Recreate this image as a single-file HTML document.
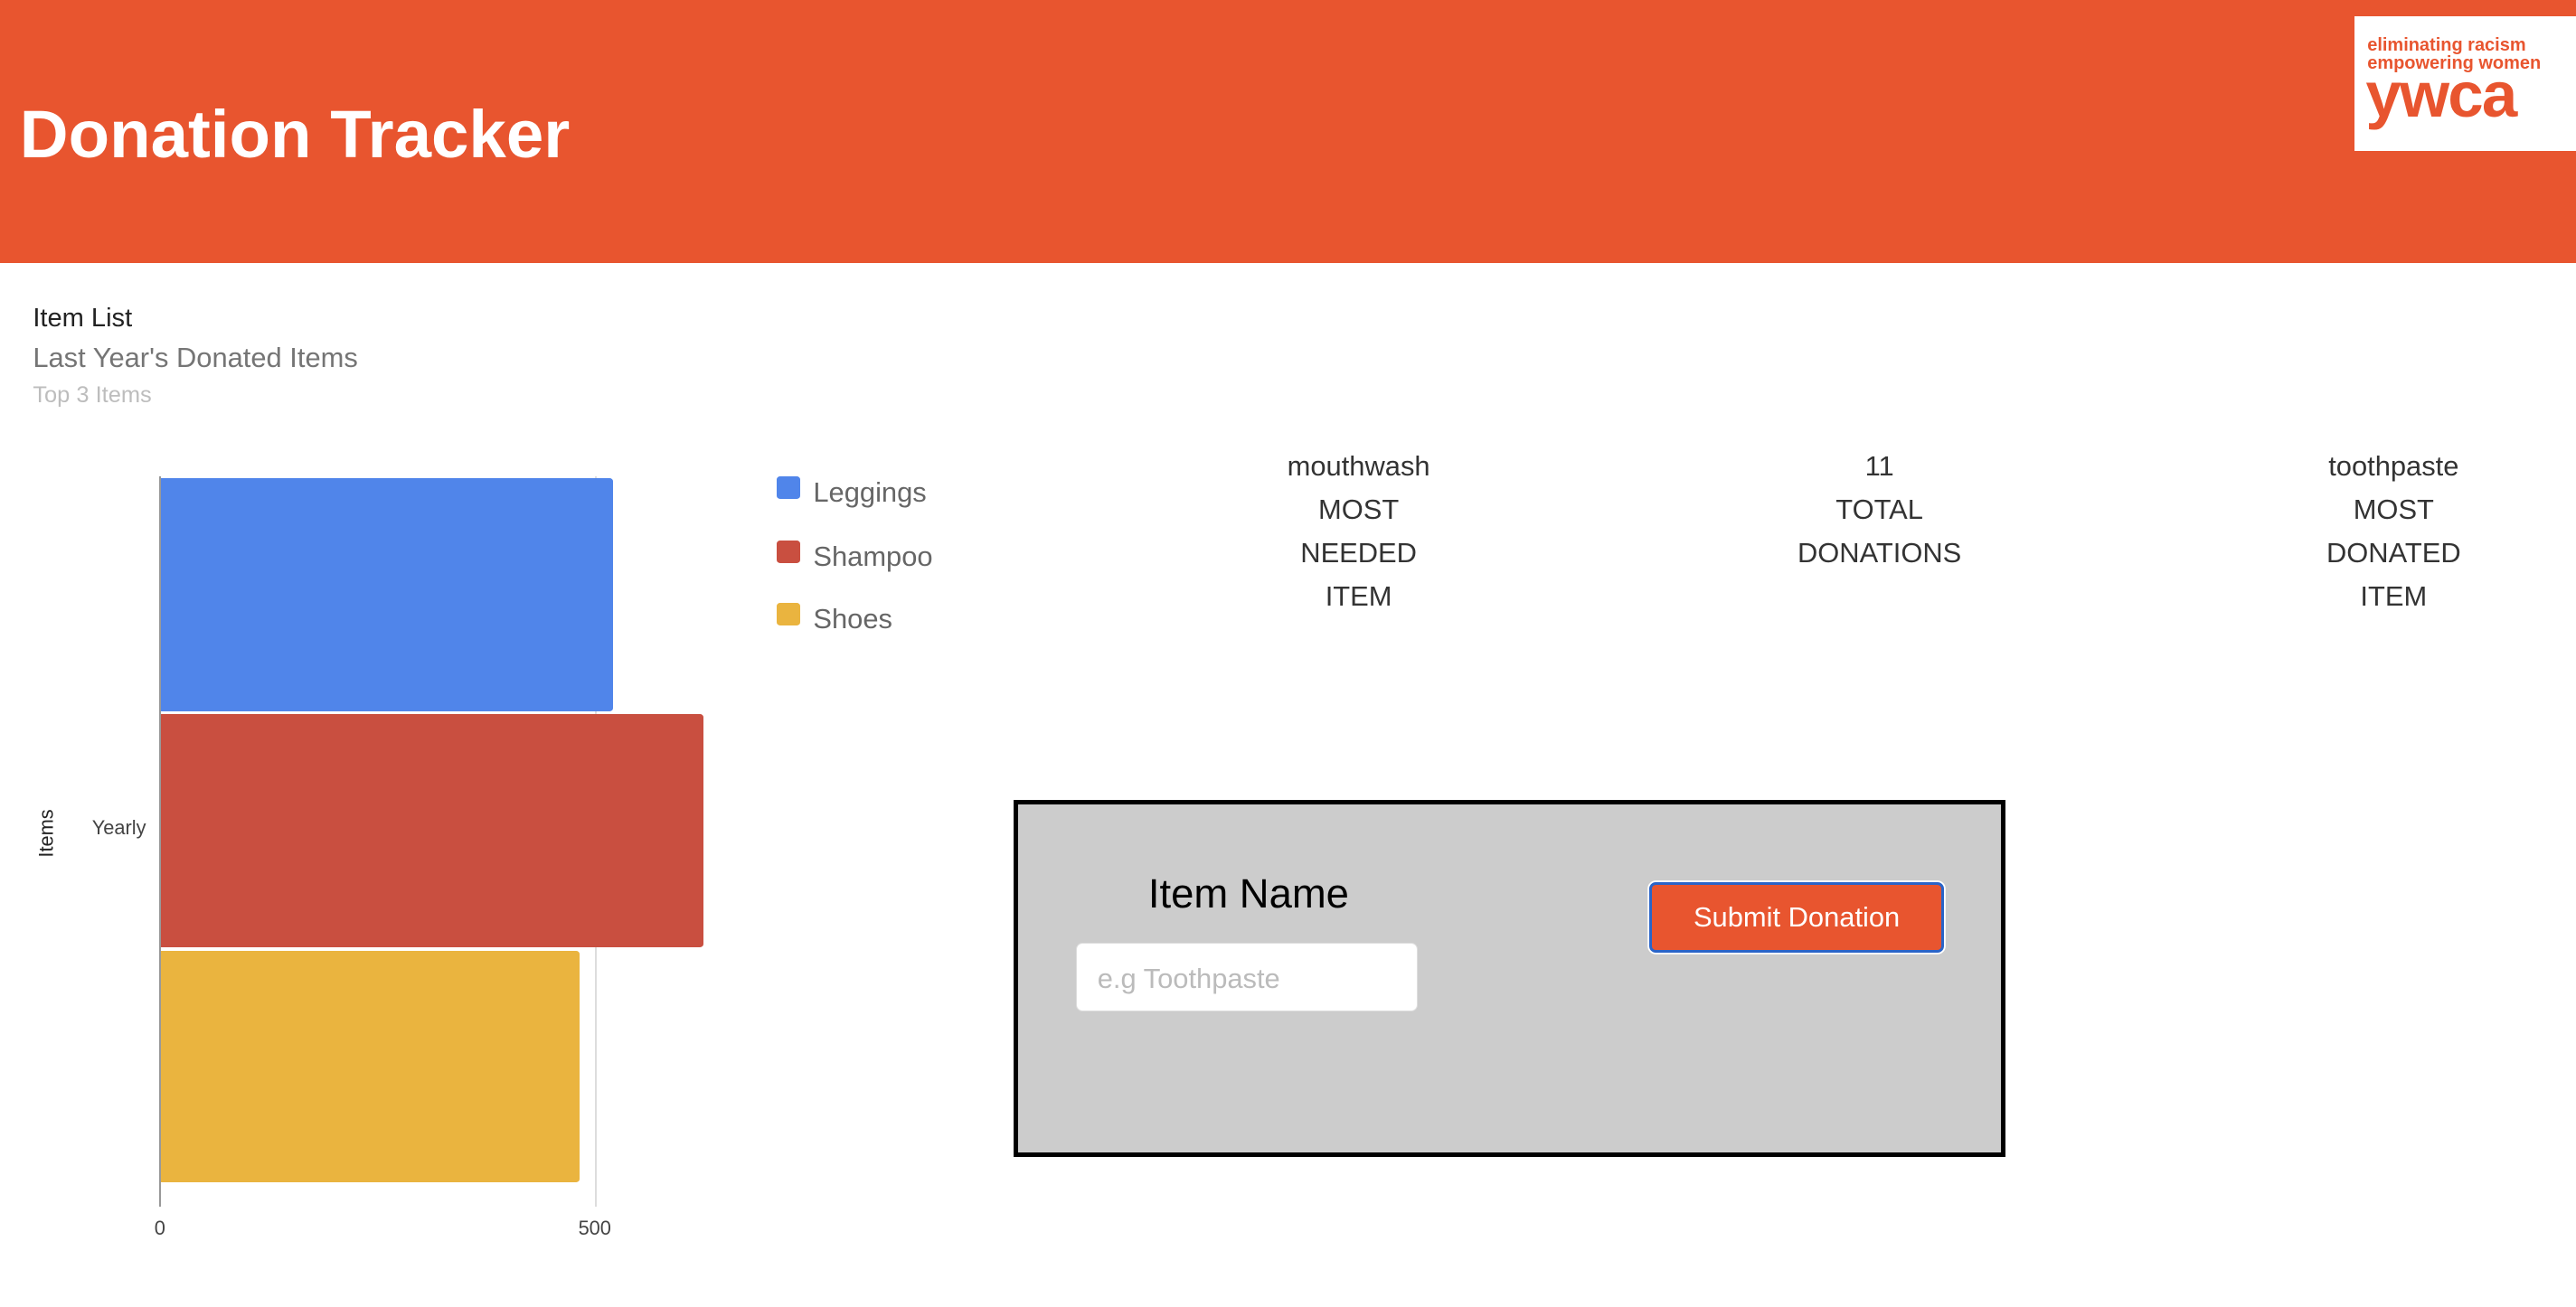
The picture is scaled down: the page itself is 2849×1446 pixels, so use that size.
<!DOCTYPE html>
<html><head><meta charset="utf-8"><style>
html,body{margin:0;padding:0;background:#fff;overflow:hidden}
body{width:1568px;height:796px;zoom:1.81696;position:relative;font-family:"Liberation Sans",sans-serif}
.a{position:absolute;white-space:nowrap}
.hdr{left:0;top:0;width:1568px;height:160px;background:#E8552F}
.logo{left:1433px;top:10px;width:135px;height:82px;background:#fff}
.st{font-size:17px;color:#333;text-align:center;width:200px;line-height:26.3px}
.leg{width:14px;height:14px;border-radius:2px}
.lt{font-size:17px;color:#666}
</style></head><body>
<div class="a hdr"></div>
<div class="a" style="left:12px;top:57px;font-size:41px;font-weight:bold;color:#fff;line-height:50px">Donation Tracker</div>
<div class="a logo">
  <div class="a" style="left:8px;top:12px;font-size:11px;font-weight:bold;color:#E8552F;line-height:11px">eliminating racism</div>
  <div class="a" style="left:8px;top:23px;font-size:11px;font-weight:bold;color:#E8552F;line-height:11px">empowering women</div>
  <div class="a" style="left:7px;top:29px;font-size:39px;font-weight:bold;color:#E8552F;line-height:39px;letter-spacing:-1px">ywca</div>
</div>

<div class="a" style="left:20px;top:185px;font-size:16px;color:#222">Item List</div>
<div class="a" style="left:20px;top:208px;font-size:17px;color:#757575">Last Year's Donated Items</div>
<div class="a" style="left:20px;top:233px;font-size:14px;color:#bdbdbd">Top 3 Items</div>

<div class="a" style="left:362px;top:290px;width:1px;height:445px;background:#ddd"></div>
<div class="a" style="left:98px;top:291px;width:275px;height:142px;background:#5085EA;border-radius:0 2px 2px 0"></div>
<div class="a" style="left:98px;top:435px;width:330px;height:142px;background:#C94F40;border-radius:0 2px 2px 0"></div>
<div class="a" style="left:98px;top:579px;width:255px;height:141px;background:#EAB43F;border-radius:0 2px 2px 0"></div>
<div class="a" style="left:97px;top:290px;width:1px;height:445px;background:#999"></div>
<div class="a" style="left:94px;top:741px;font-size:12px;color:#444">0</div>
<div class="a" style="left:352px;top:741px;font-size:12px;color:#444">500</div>
<div class="a" style="left:56px;top:497px;font-size:12px;color:#444">Yearly</div>
<div class="a" style="left:13px;top:498px;font-size:12px;color:#222;transform:rotate(-90deg);transform-origin:16px 8px">Items</div>

<div class="a leg" style="left:473px;top:290px;background:#5085EA"></div>
<div class="a lt" style="left:495px;top:290px">Leggings</div>
<div class="a leg" style="left:473px;top:329px;background:#C94F40"></div>
<div class="a lt" style="left:495px;top:329px">Shampoo</div>
<div class="a leg" style="left:473px;top:367px;background:#EAB43F"></div>
<div class="a lt" style="left:495px;top:367px">Shoes</div>

<div class="a st" style="left:727px;top:271px">mouthwash<br>MOST<br>NEEDED<br>ITEM</div>
<div class="a st" style="left:1044px;top:271px">11<br>TOTAL<br>DONATIONS</div>
<div class="a st" style="left:1357px;top:271px">toothpaste<br>MOST<br>DONATED<br>ITEM</div>

<div class="a" style="left:617px;top:487px;width:598px;height:212px;border:3px solid #000;background:#ccc"></div>
<div class="a" style="left:660px;top:530px;width:200px;text-align:center;font-size:25px;color:#000">Item Name</div>
<div class="a" style="left:655px;top:574px;width:207px;height:41px;background:#fff;border:1px solid #ddd;border-radius:4px"></div>
<div class="a" style="left:668px;top:586px;font-size:17px;color:#bbb">e.g Toothpaste</div>
<div class="a" style="left:1004px;top:537px;width:176px;height:40px;background:#E8552F;border:2px solid #2a64c8;border-radius:4px;box-shadow:0 0 0 1px #fff;color:#fff;font-size:17px;text-align:center;line-height:40px">Submit Donation</div>
</body></html>
